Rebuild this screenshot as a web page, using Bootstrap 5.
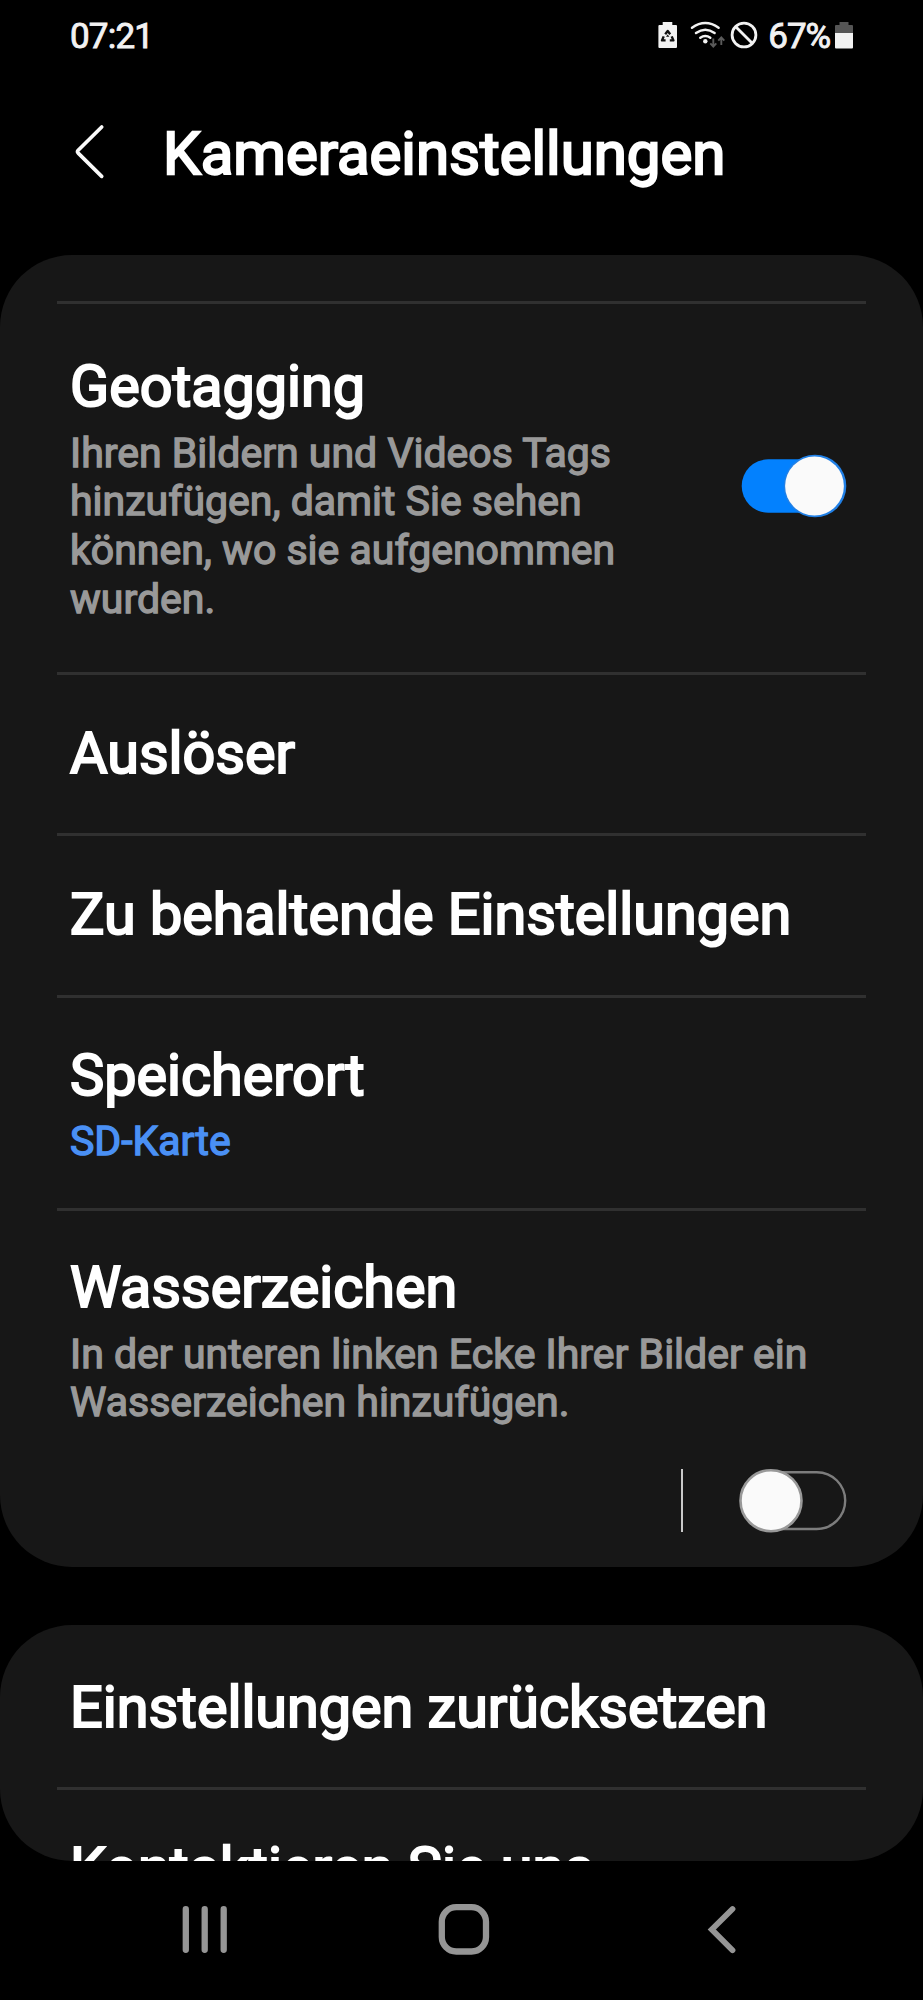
<!DOCTYPE html>
<html lang="de" data-bs-theme="dark">
<head>
<meta charset="utf-8">
<meta name="viewport" content="width=device-width, initial-scale=1">
<title>Kameraeinstellungen</title>
<link href="https://cdn.jsdelivr.net/npm/bootstrap@5.3.0/dist/css/bootstrap.min.css" rel="stylesheet">
<style>
  html, body { background: #000; overflow: hidden; }
  body { font-family: Roboto, sans-serif; color: #fafafa; }
  svg { display: block; flex: none; }
  .phone { height: 2000px; }

  .status { height: 72px; padding: 1px 70px 0 70px; font-size: 35px; line-height: 71px; color: #f2f2f2; -webkit-text-stroke: .9px currentColor; }
  .status .clock { letter-spacing: -.8px; }
  .status .charge { letter-spacing: -1.1px; margin: 0 5px 0 10px; }
  .status .wifi { margin: 0 5px 0 13px; }

  .topbar { height: 183px; padding: 46px 0 0 74px; }
  .topbar h1 { font-size: 60px; line-height: 72px; font-weight: 400; margin: 0 0 0 57px; -webkit-text-stroke: 2.3px currentColor; }
  .topbar svg { margin-top: 4px; }

  .panel { background: #171717; border: 0; border-radius: 72px; overflow: hidden; --bs-card-color: #fafafa; }
  .panel-main { height: 1312px; padding-top: 46px; }
  .panel-more { height: 236px; margin-top: 58px; }
  .entry { margin: 0 57px; padding: 45px 13px 0; border-top: 3px solid #303030; flex: none; }
  .entry h2 { font-size: 57.5px; line-height: 68px; font-weight: 400; margin: 0; white-space: nowrap; -webkit-text-stroke: 2.1px currentColor; }
  .entry p { font-size: 41px; line-height: 48.7px; margin: 7.5px 0 0; color: #999; white-space: nowrap; -webkit-text-stroke: 1.4px currentColor; }
  .entry p.value { color: #4a90f5; }
  .entry-geo { height: 371px; padding-top: 49px; }
  .entry-shutter { height: 161px; }
  .entry-keep { height: 162px; }
  .entry-storage { height: 213px; padding-top: 43.5px; }
  .entry-mark { padding-top: 43px; }
  .entry-reset { height: 161.5px; padding-top: 48.5px; border-top: 0; }
  .toggle-on { margin: 100px 2px 0 0; }
  .switch-row { margin: 41px 2px 0 0; gap: 56px; }
  .split { width: 2px; height: 63px; background: #c9c9c9; }

  .sysnav { height: 139px; padding: 42px 185px 0 182px; }
  .sysnav .home { margin-right: 7px; }
</style>
</head>
<body>
<div class="phone d-flex flex-column">
  <div class="status d-flex justify-content-between align-items-start">
    <span class="clock">07:21</span>
    <div class="d-flex align-items-start">
      <!-- battery protection -->
      <svg width="19" height="70" viewBox="657 1 19 70">
        <path fill="#f2f2f2" d="M661.700 22h9.600v3h3.700q1 0 1 1v21q0 1-1 1h-16.600q-1 0-1-1v-21q0-1 1-1h3.300z"/>
        <path fill="none" stroke="#111" stroke-width="2.400" stroke-linejoin="round" d="M664.200 34.200l2.500-3.200 2.500 3.200M670.700 36.400l1.700 4h-3.600M662.700 36.400l-1.700 4h3.600"/>
        <path fill="#111" d="M666.700 34.500l1.700 2.200h-3.400z"/>
      </svg>
      <!-- wifi with traffic arrows -->
      <svg class="wifi" width="35" height="70" viewBox="689 1 35 70">
        <g fill="none" stroke="#f2f2f2" stroke-width="2.500" stroke-linecap="round">
          <path d="M691 27.700q13.300-9.200 26.600 0M695 33q9.300-6.600 18.600 0M699.300 37.800q5-3.500 10 0"/>
        </g>
        <circle cx="704.300" cy="41.300" r="2.200" fill="#f2f2f2"/>
        <g fill="none" stroke="#5a5a5a" stroke-width="1.900">
          <path d="M712.300 38.500v7.500M709.300 43.300l3 3.200 3-3.200M720.300 45v-7.500M717.300 40.600l3-3.200 3 3.200"/>
        </g>
      </svg>
      <svg width="28" height="70" viewBox="729 1 28 70">
        <g fill="none" stroke="#f2f2f2" stroke-width="2.800"><circle cx="743" cy="35" r="11.900"/><path d="M734.500 26.500l17 17"/></g>
      </svg>
      <span class="charge">67%</span>
      <svg width="18" height="70" viewBox="835 1 18 70">
        <path fill="#555" d="M839.500 22h9v3h3.500q1 0 1 1v7h-18v-7q0-1 1-1h3.500z"/>
        <path fill="#f2f2f2" d="M835 33h18v14.500q0 1-1 1h-16q-1 0-1-1z"/>
      </svg>
    </div>
  </div>

  <header class="topbar d-flex align-items-start">
    <svg width="32" height="60" viewBox="74 122 32 60" fill="none" stroke="#fafafa" stroke-width="3.700" stroke-linecap="round" stroke-linejoin="round"><path d="M101.700 127l-23.500 23.300q-1.300 1.400 0 2.800l23.500 23.300"/></svg>
    <h1>Kameraeinstellungen</h1>
  </header>

  <main class="flex-grow-1">
    <section class="panel panel-main card">
      <div class="entry entry-geo d-flex justify-content-between align-items-start">
        <div>
          <h2>Geotagging</h2>
          <p>Ihren Bildern und Videos Tags<br>hinzufügen, damit Sie sehen<br>können, wo sie aufgenommen<br>wurden.</p>
        </div>
        <svg class="toggle-on" width="112" height="66" viewBox="738 453 112 66">
          <rect x="740.700" y="459.300" width="104" height="53.400" rx="26.700" fill="#0381fe"/>
          <circle cx="814" cy="486" r="31.300" fill="#2180e6"/>
          <circle cx="813.500" cy="486" r="29.400" fill="#fafafa"/>
        </svg>
      </div>
      <div class="entry entry-shutter"><h2>Auslöser</h2></div>
      <div class="entry entry-keep"><h2>Zu behaltende Einstellungen</h2></div>
      <div class="entry entry-storage">
        <h2>Speicherort</h2>
        <p class="value">SD-Karte</p>
      </div>
      <div class="entry entry-mark">
        <h2>Wasserzeichen</h2>
        <p>In der unteren linken Ecke Ihrer Bilder ein<br>Wasserzeichen hinzufügen.</p>
        <div class="switch-row d-flex justify-content-end align-items-center">
          <div class="split"></div>
          <svg width="112" height="66" viewBox="738 1468 112 66">
            <rect x="741" y="1472.200" width="103.200" height="56.800" rx="28.400" fill="none" stroke="#7d7d7d" stroke-width="2.400"/>
            <circle cx="770" cy="1500.700" r="30.500" fill="#fafafa" stroke="#999" stroke-width="2.600"/>
          </svg>
        </div>
      </div>
    </section>

    <section class="panel panel-more card">
      <div class="entry entry-reset"><h2>Einstellungen zurücksetzen</h2></div>
      <div class="entry"><h2>Kontaktieren Sie uns</h2></div>
    </section>
  </main>

  <nav class="sysnav d-flex justify-content-between align-items-start">
    <svg width="46" height="54" viewBox="182 1903 46 54" stroke="#959595" stroke-width="6.300" stroke-linecap="round"><path d="M185.800 1909.200v40.600M204.700 1909.200v40.600M223.700 1909.200v40.600"/></svg>
    <svg class="home" width="54" height="54" viewBox="436 1903 54 54" fill="none" stroke="#959595" stroke-width="6.300"><rect x="440.800" y="1907.200" width="44.200" height="44.300" rx="14.500"/></svg>
    <svg width="32" height="54" viewBox="705 1903 32 54" fill="none" stroke="#959595" stroke-width="5.800" stroke-linecap="round"><path d="M731.500 1909l-20.700 20.500 20.700 20.700"/></svg>
  </nav>
</div>
<script src="https://cdn.jsdelivr.net/npm/bootstrap@5.3.0/dist/js/bootstrap.bundle.min.js"></script>
</body>
</html>
